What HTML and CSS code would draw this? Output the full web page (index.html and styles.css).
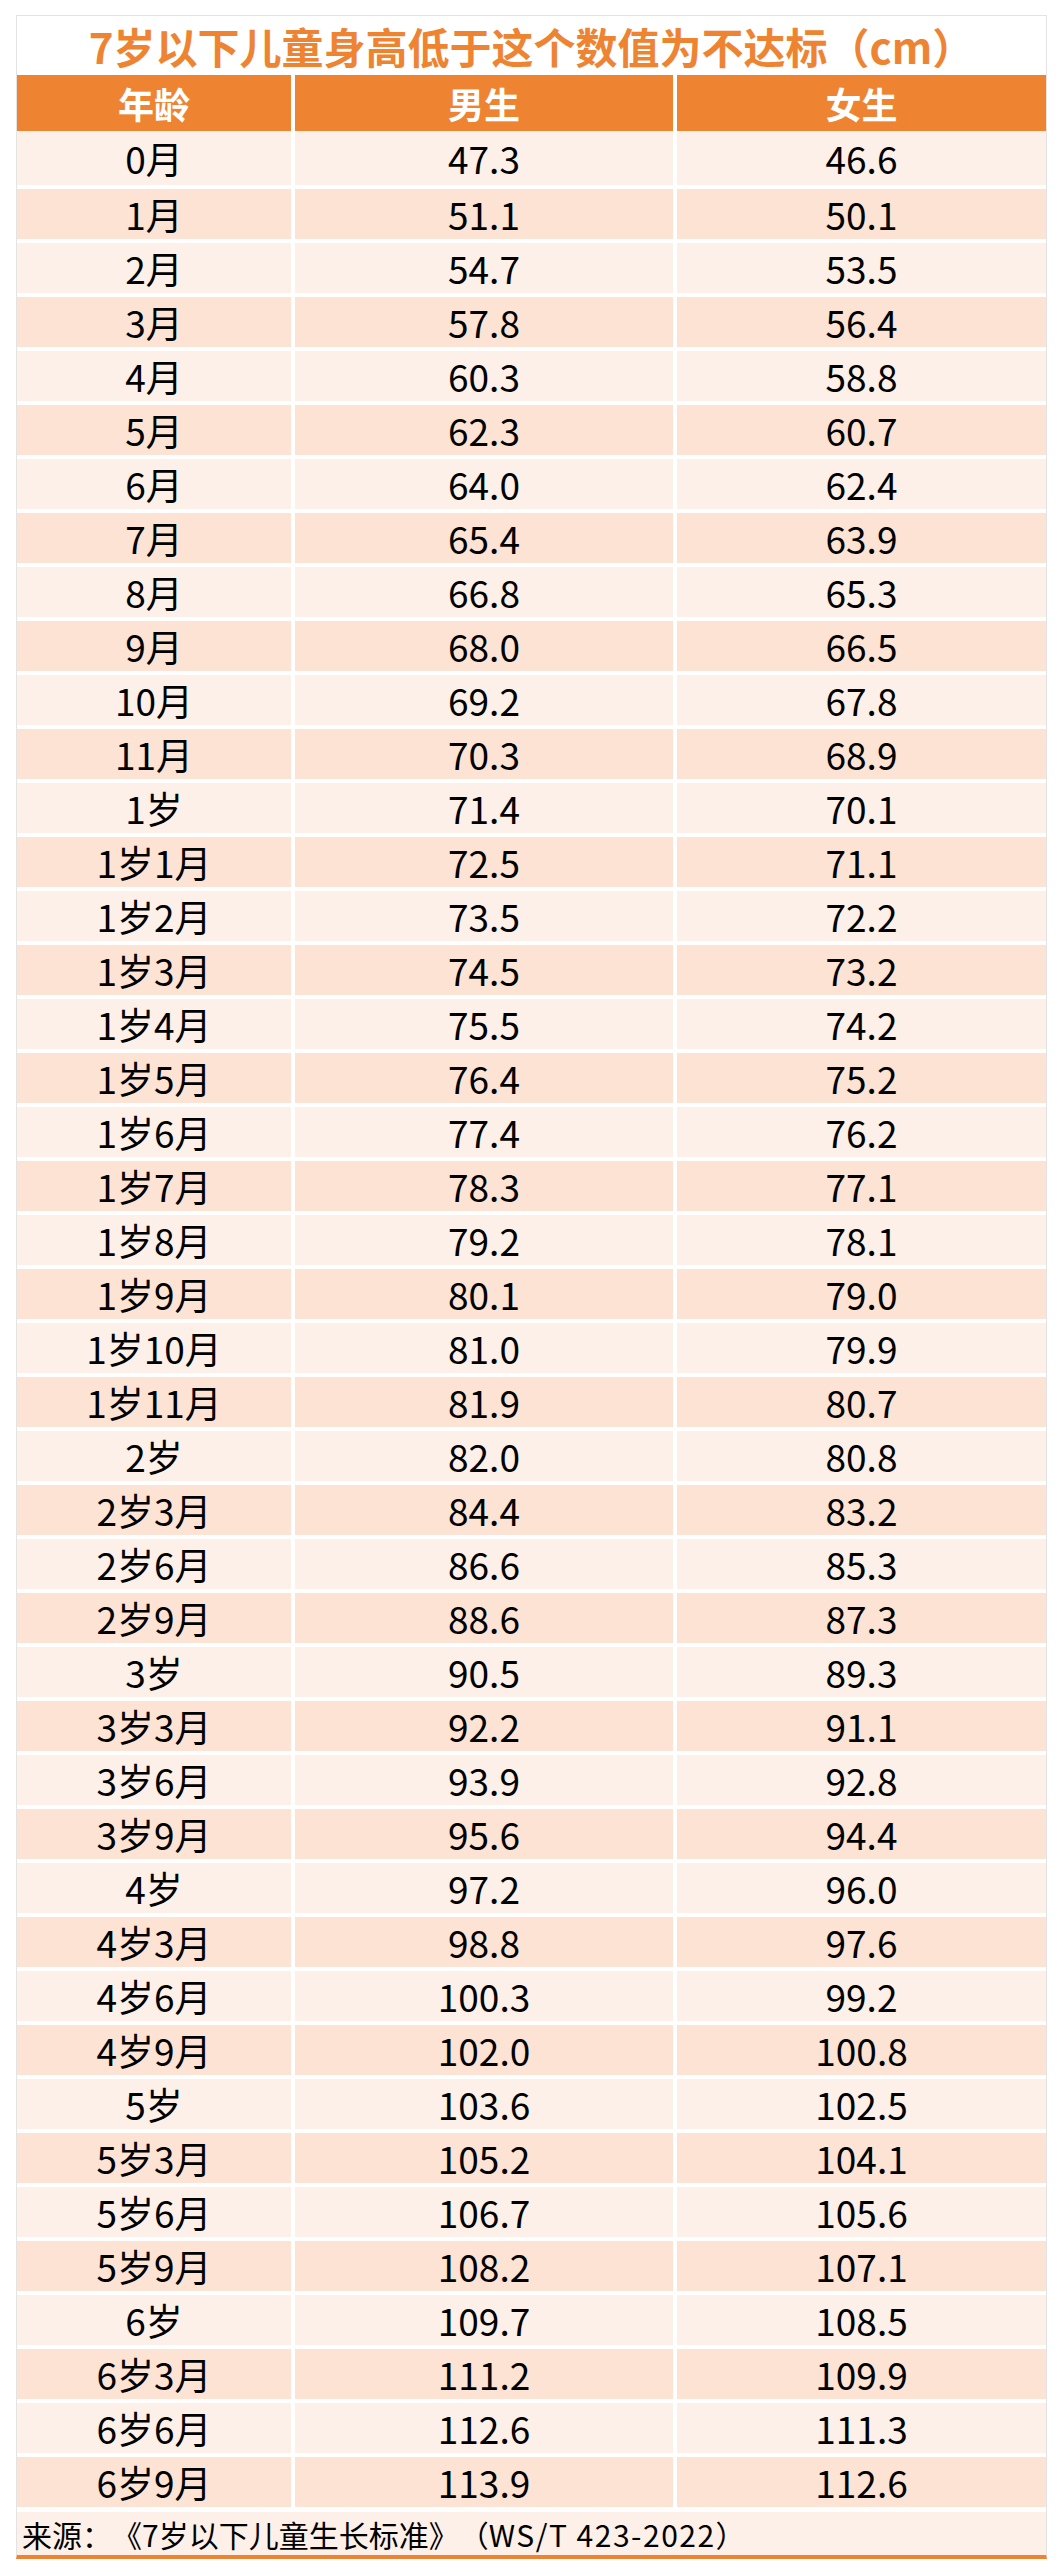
FILE: index.html
```html
<!DOCTYPE html>
<html lang="zh-CN">
<head>
<meta charset="utf-8">
<title>7岁以下儿童身高低于这个数值为不达标（cm）</title>
<link rel="stylesheet" href="styles.css">
</head>
<body>
<div class="sheet">
  <div class="title">7岁以下儿童身高低于这个数值为不达标（cm）</div>
  <div class="row head"><div class="cell">年龄</div><div class="cell">男生</div><div class="cell">女生</div></div>
  <div class="body">
    <div class="row light first"><div class="cell">0月</div><div class="cell">47.3</div><div class="cell">46.6</div></div>
    <div class="row dark"><div class="cell">1月</div><div class="cell">51.1</div><div class="cell">50.1</div></div>
    <div class="row light"><div class="cell">2月</div><div class="cell">54.7</div><div class="cell">53.5</div></div>
    <div class="row dark"><div class="cell">3月</div><div class="cell">57.8</div><div class="cell">56.4</div></div>
    <div class="row light"><div class="cell">4月</div><div class="cell">60.3</div><div class="cell">58.8</div></div>
    <div class="row dark"><div class="cell">5月</div><div class="cell">62.3</div><div class="cell">60.7</div></div>
    <div class="row light"><div class="cell">6月</div><div class="cell">64.0</div><div class="cell">62.4</div></div>
    <div class="row dark"><div class="cell">7月</div><div class="cell">65.4</div><div class="cell">63.9</div></div>
    <div class="row light"><div class="cell">8月</div><div class="cell">66.8</div><div class="cell">65.3</div></div>
    <div class="row dark"><div class="cell">9月</div><div class="cell">68.0</div><div class="cell">66.5</div></div>
    <div class="row light"><div class="cell">10月</div><div class="cell">69.2</div><div class="cell">67.8</div></div>
    <div class="row dark"><div class="cell">11月</div><div class="cell">70.3</div><div class="cell">68.9</div></div>
    <div class="row light"><div class="cell">1岁</div><div class="cell">71.4</div><div class="cell">70.1</div></div>
    <div class="row dark"><div class="cell">1岁1月</div><div class="cell">72.5</div><div class="cell">71.1</div></div>
    <div class="row light"><div class="cell">1岁2月</div><div class="cell">73.5</div><div class="cell">72.2</div></div>
    <div class="row dark"><div class="cell">1岁3月</div><div class="cell">74.5</div><div class="cell">73.2</div></div>
    <div class="row light"><div class="cell">1岁4月</div><div class="cell">75.5</div><div class="cell">74.2</div></div>
    <div class="row dark"><div class="cell">1岁5月</div><div class="cell">76.4</div><div class="cell">75.2</div></div>
    <div class="row light"><div class="cell">1岁6月</div><div class="cell">77.4</div><div class="cell">76.2</div></div>
    <div class="row dark"><div class="cell">1岁7月</div><div class="cell">78.3</div><div class="cell">77.1</div></div>
    <div class="row light"><div class="cell">1岁8月</div><div class="cell">79.2</div><div class="cell">78.1</div></div>
    <div class="row dark"><div class="cell">1岁9月</div><div class="cell">80.1</div><div class="cell">79.0</div></div>
    <div class="row light"><div class="cell">1岁10月</div><div class="cell">81.0</div><div class="cell">79.9</div></div>
    <div class="row dark"><div class="cell">1岁11月</div><div class="cell">81.9</div><div class="cell">80.7</div></div>
    <div class="row light"><div class="cell">2岁</div><div class="cell">82.0</div><div class="cell">80.8</div></div>
    <div class="row dark"><div class="cell">2岁3月</div><div class="cell">84.4</div><div class="cell">83.2</div></div>
    <div class="row light"><div class="cell">2岁6月</div><div class="cell">86.6</div><div class="cell">85.3</div></div>
    <div class="row dark"><div class="cell">2岁9月</div><div class="cell">88.6</div><div class="cell">87.3</div></div>
    <div class="row light"><div class="cell">3岁</div><div class="cell">90.5</div><div class="cell">89.3</div></div>
    <div class="row dark"><div class="cell">3岁3月</div><div class="cell">92.2</div><div class="cell">91.1</div></div>
    <div class="row light"><div class="cell">3岁6月</div><div class="cell">93.9</div><div class="cell">92.8</div></div>
    <div class="row dark"><div class="cell">3岁9月</div><div class="cell">95.6</div><div class="cell">94.4</div></div>
    <div class="row light"><div class="cell">4岁</div><div class="cell">97.2</div><div class="cell">96.0</div></div>
    <div class="row dark"><div class="cell">4岁3月</div><div class="cell">98.8</div><div class="cell">97.6</div></div>
    <div class="row light"><div class="cell">4岁6月</div><div class="cell">100.3</div><div class="cell">99.2</div></div>
    <div class="row dark"><div class="cell">4岁9月</div><div class="cell">102.0</div><div class="cell">100.8</div></div>
    <div class="row light"><div class="cell">5岁</div><div class="cell">103.6</div><div class="cell">102.5</div></div>
    <div class="row dark"><div class="cell">5岁3月</div><div class="cell">105.2</div><div class="cell">104.1</div></div>
    <div class="row light"><div class="cell">5岁6月</div><div class="cell">106.7</div><div class="cell">105.6</div></div>
    <div class="row dark"><div class="cell">5岁9月</div><div class="cell">108.2</div><div class="cell">107.1</div></div>
    <div class="row light"><div class="cell">6岁</div><div class="cell">109.7</div><div class="cell">108.5</div></div>
    <div class="row dark"><div class="cell">6岁3月</div><div class="cell">111.2</div><div class="cell">109.9</div></div>
    <div class="row light"><div class="cell">6岁6月</div><div class="cell">112.6</div><div class="cell">111.3</div></div>
    <div class="row dark"><div class="cell">6岁9月</div><div class="cell">113.9</div><div class="cell">112.6</div></div>
  </div>
  <div class="source">来源：《7岁以下儿童生长标准》（<span class="code">WS/T 423-2022</span>）</div>
</div>
</body>
</html>
```

FILE: styles.css
```css
html, body {
  margin: 0;
  padding: 0;
  background: #ffffff;
}

body {
  font-family: "Noto Sans CJK SC", "Noto Sans", sans-serif;
  color: #000000;
  text-spacing-trim: space-all;
}

.sheet {
  margin: 15px 0 0 16px;
  width: 1029px;
  border: 1px solid #e3e3e3;
  border-bottom: 4px solid #ee8432;
  background: #ffffff;
}

.title {
  height: 59px;
  display: flex;
  align-items: center;
  justify-content: center;
  color: #ee8432;
  font-weight: 700;
  font-size: 42px;
  line-height: 1;
  letter-spacing: 0;
}

.row {
  display: grid;
  grid-template-columns: 274px 378px 369px;
  column-gap: 4px;
  height: 50px;
}

.cell {
  display: flex;
  align-items: center;
  justify-content: center;
  font-size: 37px;
  line-height: 1;
}

.head {
  height: 56px;
}

.head .cell {
  background: #ee8432;
  color: #ffffff;
  font-weight: 700;
  font-size: 36px;
}

.body {
  display: flex;
  flex-direction: column;
  gap: 4px;
}

.row.first {
  height: 54px;
}

.light .cell {
  background: #fcf0e8;
}

.dark .cell {
  background: #fce3d4;
}

.source {
  margin-top: 5px;
  height: 43px;
  background: #fcf0e8;
  display: flex;
  align-items: center;
  padding-left: 5px;
  font-size: 30px;
  line-height: 1;
  white-space: pre;
  text-spacing-trim: space-all;
}

.source .code {
  letter-spacing: 1.5px;
}
```
